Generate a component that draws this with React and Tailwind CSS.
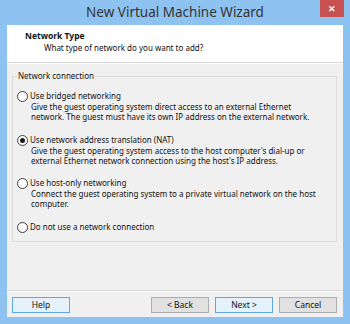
export default function App() {
  const font = { fontFamily: '"Segoe UI", "Noto Sans", "Open Sans", sans-serif' };
  const Radio = ({ checked }) => (
    <span className="relative inline-block w-[11px] h-[11px] rounded-full border border-[#3c3c3c] bg-white shrink-0">
      {checked && <span className="absolute left-[2px] top-[2px] w-[5px] h-[5px] rounded-full bg-[#1a1a1a]" />}
    </span>
  );
  const Option = ({ checked, label, desc, mt }) => (
    <div className={"flex flex-col " + (mt || "")}>
      <div className="flex items-center gap-[2px] h-[12px]">
        <Radio checked={checked} />
        <span className="text-[8px] leading-[12px] text-[#111] whitespace-nowrap">{label}</span>
      </div>
      {desc && (
        <div className="pl-[14px] text-[8px] leading-[10px] text-[#111] whitespace-nowrap">
          {desc.map((l, i) => (
            <div key={i}>{l}</div>
          ))}
        </div>
      )}
    </div>
  );
  const Btn = ({ children, active }) => (
    <div
      className={
        "w-[58px] h-[16px] flex items-center justify-center text-[8.5px] text-[#111] border " +
        (active ? "border-[#5ea6ea] bg-[#e5f1fb]" : "border-[#adadad] bg-[#e1e1e1]")
      }
    >
      {children}
    </div>
  );
  return (
    <div className="w-[350px] h-[324px] bg-[#8ec3f1] flex flex-col overflow-hidden" style={font}>
      <div className="relative h-[25px] flex items-center justify-center shrink-0">
        <span className="text-[13.5px] text-[#333] leading-none">New Virtual Machine Wizard</span>
        <div className="absolute right-[6px] top-0 w-[24px] h-[17px] bg-[#c75050] flex items-center justify-center text-white text-[9px] font-bold leading-none">
          ✕
        </div>
      </div>
      <div className="mx-[7px] mb-[7px] flex-1 flex flex-col bg-[#f0f0f0]">
        <div className="h-[38px] bg-white border-b border-[#d5d5d5] pl-[18px] pt-[5px] shrink-0">
          <div className="text-[8.5px] font-bold text-[#111] leading-[12px]">Network Type</div>
          <div className="pl-[19px] text-[8px] text-[#111] leading-[12px]">What type of network do you want to add?</div>
        </div>
        <div className="h-[1px] bg-white shrink-0" />
        <div className="pl-[5px] pr-[6px] pt-[12px] shrink-0">
          <div className="relative border border-[#dcdcdc] h-[166px] pt-[13px] pl-[4px]">
            <span className="absolute left-[4px] -top-[6px] bg-[#f0f0f0] px-[1px] text-[8px] leading-[10px] text-[#111]">
              Network connection
            </span>
            <Option
              label="Use bridged networking"
              desc={[
                "Give the guest operating system direct access to an external Ethernet",
                "network. The guest must have its own IP address on the external network.",
              ]}
            />
            <Option
              mt="mt-[12px]"
              checked
              label="Use network address translation (NAT)"
              desc={[
                "Give the guest operating system access to the host computer's dial-up or",
                "external Ethernet network connection using the host's IP address.",
              ]}
            />
            <Option
              mt="mt-[11px]"
              label="Use host-only networking"
              desc={[
                "Connect the guest operating system to a private virtual network on the host",
                "computer.",
              ]}
            />
            <Option mt="mt-[12px]" label="Do not use a network connection" />
          </div>
        </div>
        <div className="flex-1" />
        <div className="border-t border-[#d5d5d5] shrink-0">
          <div className="border-t border-white flex items-center pl-[5px] pr-[6px] pt-[5px] pb-[4px]">
            <Btn active>Help</Btn>
            <div className="flex-1" />
            <div className="flex gap-[6px]">
              <Btn>&lt; Back</Btn>
              <Btn active>Next &gt;</Btn>
              <Btn>Cancel</Btn>
            </div>
          </div>
        </div>
      </div>
    </div>
  );
}
